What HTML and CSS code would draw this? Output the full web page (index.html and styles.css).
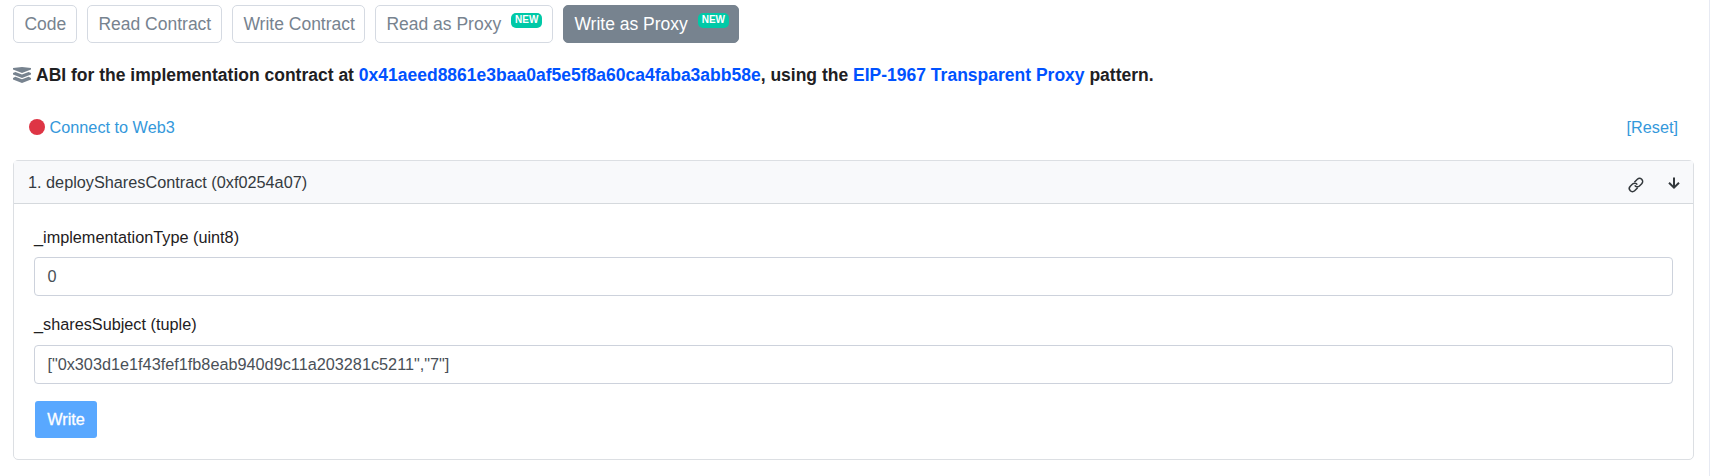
FILE: index.html
```html
<!DOCTYPE html>
<html lang="en">
<head>
<meta charset="utf-8">
<title>Write as Proxy</title>
<link rel="stylesheet" href="styles.css">
</head>
<body>
<main class="panel">
  <nav class="tabs">
    <a class="tab tab-code">Code</a>
    <a class="tab tab-read">Read Contract</a>
    <a class="tab tab-write">Write Contract</a>
    <a class="tab tab-read-proxy">Read as Proxy<span class="badge">NEW</span></a>
    <a class="tab tab-write-proxy active">Write as Proxy<span class="badge">NEW</span></a>
  </nav>
  <p class="abi">
    <svg class="layers" viewBox="0 0 18 16" width="18" height="16"><path d="M0 .9 9 .1l9 .8v1.7L9 5.9 0 2.6z"/><path d="M0 6.1 2.4 5 9 7.5 15.6 5 18 6.1v1.5L9 11 0 7.6z"/><path d="M0 10.9 2.4 9.8 9 12.3l6.6-2.5 2.4 1.1v1.6L9 15.9 0 12.5z"/></svg>
    <span class="abi-text">ABI for the implementation contract at <a>0x41aeed8861e3baa0af5e5f8a60ca4faba3abb58e</a>, using the <a>EIP-1967 Transparent Proxy</a> pattern.</span>
  </p>
  <div class="connect">
    <a class="web3"><i class="dot"></i>Connect to Web3</a>
    <a>[Reset]</a>
  </div>
  <section class="card">
    <header class="card-header">
      <span>1. deploySharesContract (0xf0254a07)</span>
      <span class="tools">
        <svg width="16" height="16" viewBox="0 0 16 16"><g transform="rotate(-45 8 8)"><path d="M7.2 11.1H3A3.1 3.1 0 0 1 3 4.9H6.2A3.1 3.1 0 0 1 9.2 8.6M8.8 4.9H13A3.1 3.1 0 0 1 13 11.1H9.8A3.1 3.1 0 0 1 6.8 7.4"/></g></svg>
        <svg class="arrow" width="12" height="12" viewBox="0 0 12 12"><path d="M6 .5v10M1 5.8 6 10.6 11 5.8"/></svg>
      </span>
    </header>
    <form class="card-body">
      <label for="type">_implementationType (uint8)</label>
      <input id="type" type="text" value="0">
      <label class="label-subject" for="subject">_sharesSubject (tuple)</label>
      <input id="subject" type="text" value="[&quot;0x303d1e1f43fef1fb8eab940d9c11a203281c5211&quot;,&quot;7&quot;]">
      <button type="button">Write</button>
    </form>
  </section>
</main>
</body>
</html>
```
FILE: styles.css
```css
* { box-sizing: border-box; }
body {
  margin: 0;
  background: #fff;
  color: #1e2022;
  font: 16.26px/24px "Liberation Sans", Arial, sans-serif;
}
.panel {
  width: 1710px;
  height: 476px;
  padding: 5px 15px 0 13px;
  border-right: 1px solid #e7eaf3;
}
.tabs { display: flex; gap: 10px; }
.tab {
  display: flex;
  height: 38px;
  padding: 0 0 0 10.4px;
  border: 1px solid #d5dae2;
  border-radius: 5px;
  color: #77838f;
  font-size: 17.5px;
  line-height: 36px;
  white-space: nowrap;
}
.tab-code { width: 64px; }
.tab-read { width: 135px; }
.tab-write { width: 133px; }
.tab-read-proxy { width: 178px; }
.tab-write-proxy { width: 176px; }
.tab.active { background: #77838f; border-color: #77838f; color: #fff; }
.badge {
  width: 31px;
  height: 15px;
  margin: 7px 0 0 10px;
  border-radius: 5px;
  background: #00c9a7;
  color: #fff;
  font-size: 10px;
  font-weight: bold;
  line-height: 14px;
  text-align: center;
}
.abi {
  display: flex;
  gap: 5px;
  margin: 20px 0 0;
  font-size: 17.5px;
  font-weight: bold;
  white-space: nowrap;
}
.layers { margin-top: 4px; fill: #77838f; }
.abi a { color: #0052ff; }
.connect {
  display: flex;
  justify-content: space-between;
  margin-top: 28px;
  padding: 0 16px;
  color: #3498db;
}
.web3 { display: flex; gap: 4.5px; }
.dot { width: 16px; height: 16px; margin-top: 4px; border-radius: 50%; background: #de3545; }
.card {
  height: 300px;
  margin-top: 21px;
  border: 1px solid #dcdfe3;
  border-radius: 5px;
}
.card-header {
  display: flex;
  align-items: center;
  justify-content: space-between;
  height: 43px;
  padding: 0 13px 0 14px;
  border-bottom: 1px solid #d5d9dd;
  background: #f8f9fb;
  color: #343a40;
}
.tools { display: flex; align-items: center; gap: 24px; padding-top: 5px; }
.tools svg { overflow: visible; fill: none; stroke: #33383c; stroke-width: 1.5; }
.tools .arrow { stroke-width: 2; margin-top: -3px; }
.card-body {
  display: flex;
  flex-direction: column;
  align-items: flex-start;
  padding: 21px 20px 0;
}
.card-body label { height: 25px; margin-bottom: 7px; }
.card-body .label-subject { height: 26px; margin-top: -2px; }
.card-body input {
  width: 100%;
  height: 39px;
  margin-bottom: 18px;
  padding: 0 12.4px;
  border: 1px solid #cdd2dc;
  border-radius: 4px;
  color: #495057;
  font: inherit;
}
.card-body button {
  width: 62px;
  height: 37px;
  margin: -1px 0 0 1px;
  padding: 0 0 2px;
  border: 0;
  border-radius: 3px;
  background: #59a8ff;
  color: #fff;
  font: inherit;
  -webkit-text-stroke: .3px #fff;
}
```
